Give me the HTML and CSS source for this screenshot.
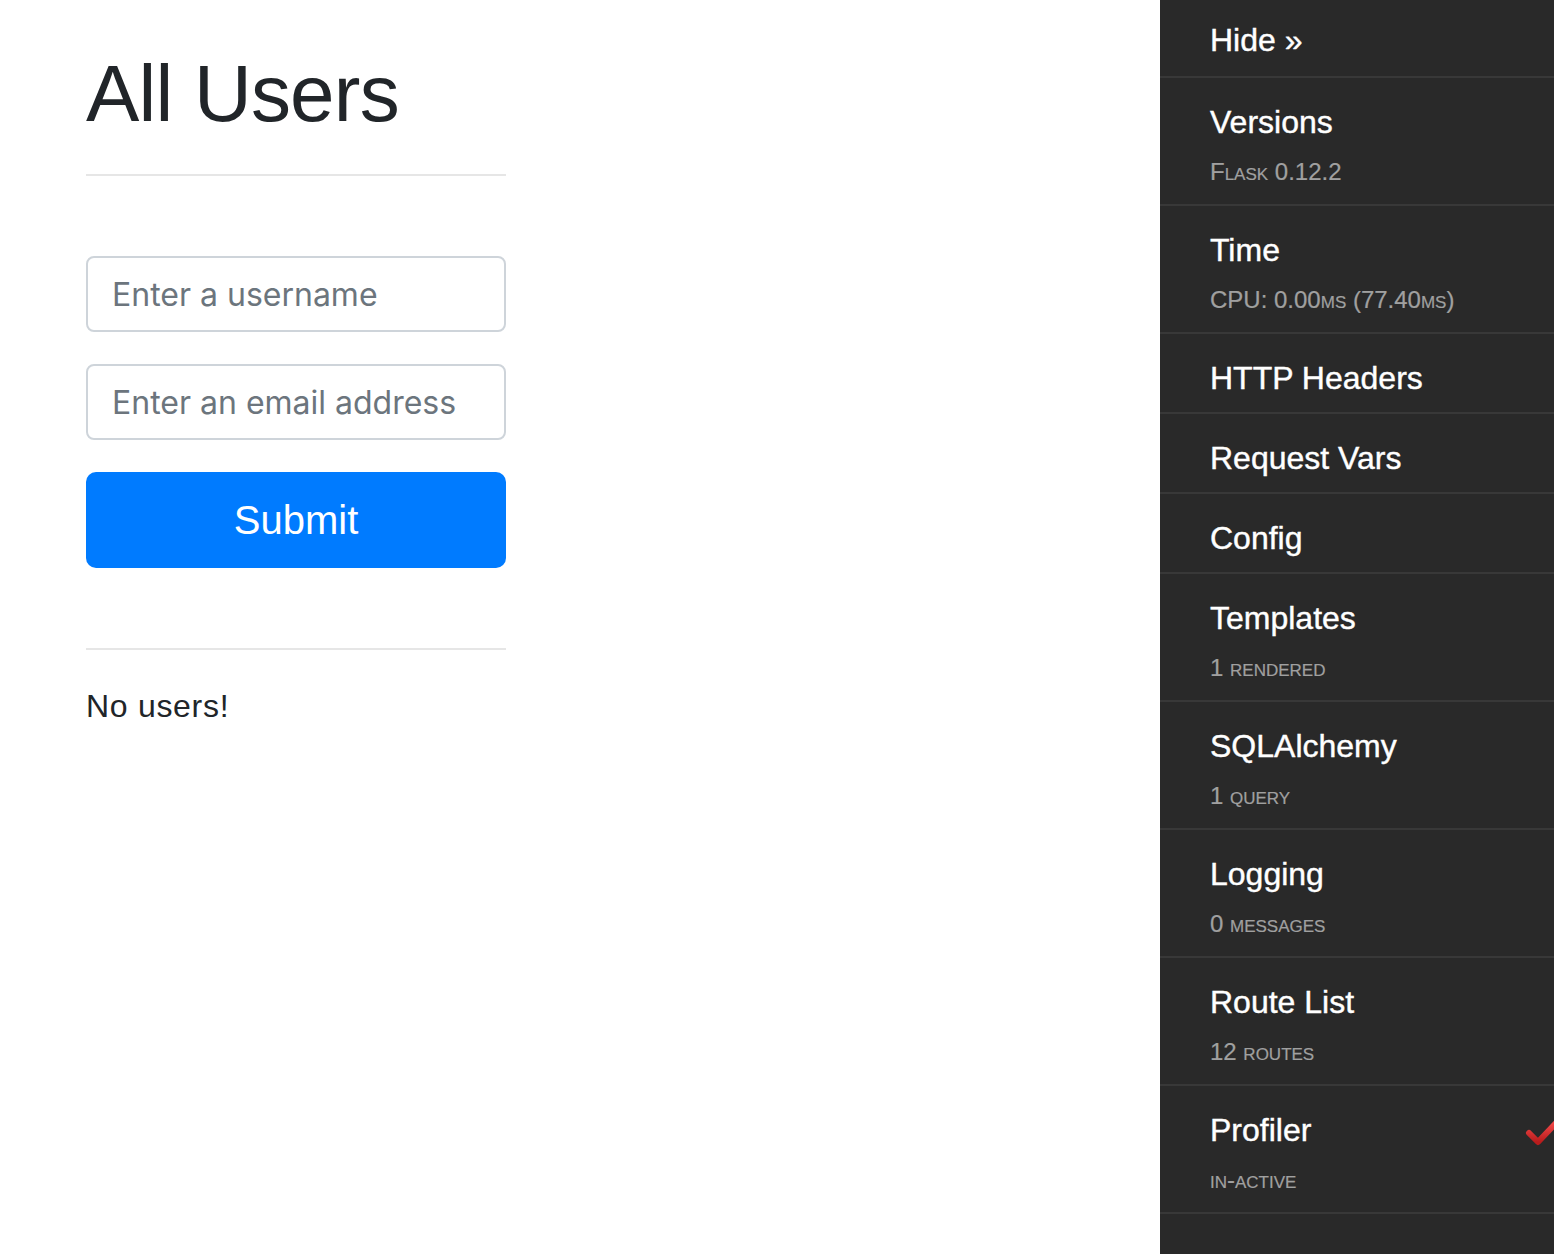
FILE: index.html
```html
<!DOCTYPE html>
<html lang="en">
<head>
<meta charset="utf-8">
<title>All Users</title>
<link rel="stylesheet" href="styles.css">
</head>
<body>
<div class="page">
  <main class="main">
    <div class="col">
      <h1 class="title">All Users</h1>
      <hr class="rule rule-top">
      <form class="form">
        <input class="field" type="text" placeholder="Enter a username">
        <input class="field" type="text" placeholder="Enter an email address">
        <button class="btn" type="button">Submit</button>
      </form>
      <hr class="rule rule-bottom">
      <p class="empty">No users!</p>
    </div>
  </main>
  <aside class="toolbar">
    <ul class="panels">
      <li class="panel panel-hide"><span class="ptitle">Hide &raquo;</span></li>
      <li class="panel"><span class="ptitle">Versions</span><small class="psub">Flask 0.12.2</small></li>
      <li class="panel"><span class="ptitle">Time</span><small class="psub">CPU: 0.00ms (77.40ms)</small></li>
      <li class="panel"><span class="ptitle">HTTP Headers</span></li>
      <li class="panel"><span class="ptitle">Request Vars</span></li>
      <li class="panel"><span class="ptitle">Config</span></li>
      <li class="panel"><span class="ptitle">Templates</span><small class="psub">1 rendered</small></li>
      <li class="panel"><span class="ptitle">SQLAlchemy</span><small class="psub">1 query</small></li>
      <li class="panel"><span class="ptitle">Logging</span><small class="psub">0 messages</small></li>
      <li class="panel"><span class="ptitle">Route List</span><small class="psub">12 routes</small></li>
      <li class="panel panel-profiler"><span class="ptitle">Profiler</span><small class="psub">in-active</small>
        <svg class="tick" width="44" height="34" viewBox="0 0 44 34">
          <defs>
            <linearGradient id="tg" x1="0" y1="0" x2="0" y2="1">
              <stop offset="0" stop-color="#f04848"/>
              <stop offset="1" stop-color="#b81c1c"/>
            </linearGradient>
          </defs>
          <path d="M4 15 L13 24 L31 5" fill="none" stroke="url(#tg)" stroke-width="6" stroke-linecap="round" stroke-linejoin="round"/>
        </svg>
      </li>
    </ul>
  </aside>
</div>
</body>
</html>
```

FILE: styles.css
```css
html, body {
  margin: 0;
  padding: 0;
  background: #ffffff;
}

body {
  overflow: hidden;
}

.page {
  display: flex;
  width: 1554px;
  height: 1254px;
}

.main {
  flex: 1;
  padding-left: 86px;
  padding-top: 46px;
}

.col {
  width: 420px;
}

.title {
  margin: 0 0 16px 0;
  font-family: "Liberation Sans", Arial, sans-serif;
  font-weight: normal;
  font-size: 80px;
  line-height: 96px;
  letter-spacing: -0.8px;
  color: #212529;
}

.rule {
  border: 0;
  border-top: 2px solid #e6e6e6;
  height: 0;
  margin: 0;
}

.rule-top {
  margin-top: 32px;
  margin-bottom: 80px;
}

.form {
  display: flex;
  flex-direction: column;
  gap: 32px;
}

.field {
  box-sizing: border-box;
  width: 420px;
  height: 76px;
  margin: 0;
  padding: 0 24px;
  border: 2px solid #ced4da;
  border-radius: 8px;
  background: #fff;
  font-family: Inter, "Liberation Sans", sans-serif;
  font-size: 32px;
  color: #495057;
  outline: none;
}

.field::placeholder {
  color: #6c757d;
  opacity: 1;
}

.btn {
  box-sizing: border-box;
  width: 420px;
  height: 96px;
  margin: 0;
  border: 0;
  border-radius: 10px;
  background: #007bff;
  color: #ffffff;
  font-family: "Liberation Sans", Arial, sans-serif;
  font-size: 40px;
  line-height: 96px;
  padding: 0;
}

.rule-bottom {
  margin-top: 80px;
  margin-bottom: 32px;
}

.empty {
  margin: 0;
  font-family: "Liberation Sans", Arial, sans-serif;
  font-size: 32px;
  line-height: 48px;
  letter-spacing: 0.7px;
  color: #212529;
}

.toolbar {
  width: 394px;
  flex: none;
  background: #292929;
  overflow: hidden;
}

.panels {
  list-style: none;
  margin: 0;
  padding: 0;
  width: 400px;
}

.panel {
  position: relative;
  display: flex;
  flex-direction: column;
  padding: 20px 20px 10px 50px;
  border-bottom: 2px solid #383838;
  font-family: "Liberation Sans", Arial, sans-serif;
}

.panel-hide {
  padding-top: 16px;
  padding-bottom: 12px;
}

.ptitle {
  font-size: 32px;
  line-height: 48px;
  color: #ffffff;
  -webkit-text-stroke: 0.4px #ffffff;
}

.psub {
  font-size: 24px;
  line-height: 48px;
  padding-top: 2px;
  margin-bottom: -2px;
  color: #a0a0a0;
  font-variant: small-caps;
  -webkit-text-stroke: 0.2px #a0a0a0;
}

.tick {
  position: absolute;
  right: -9px;
  top: 32px;
}
```
